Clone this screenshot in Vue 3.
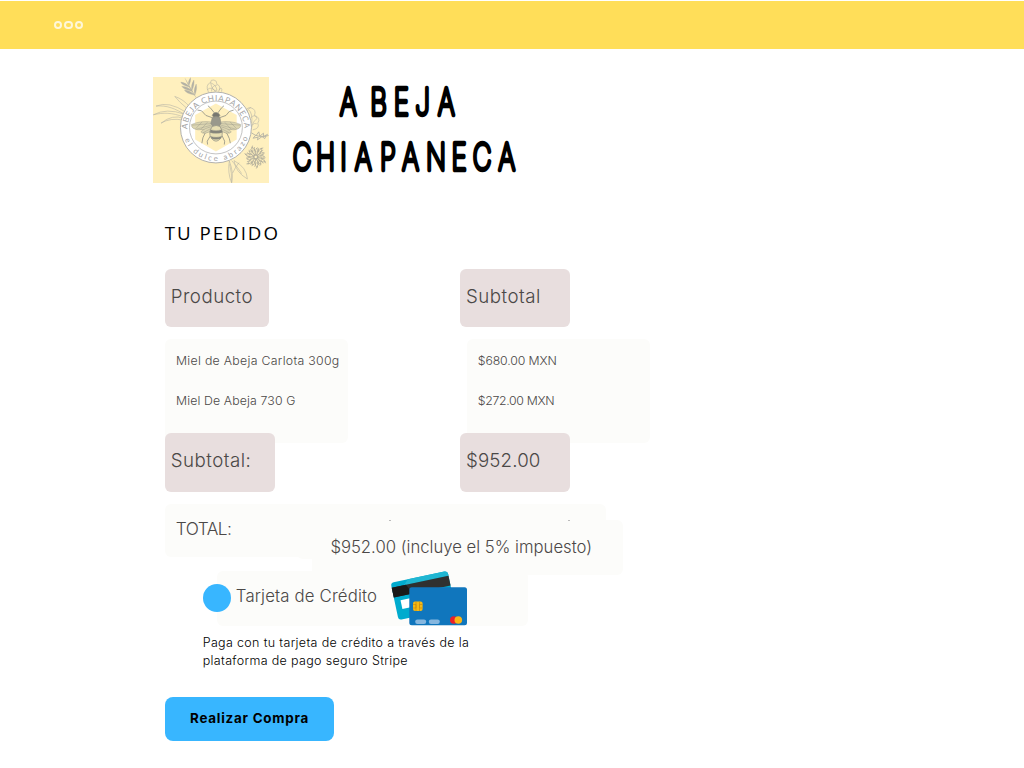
<script setup>
const products = ['Miel de Abeja Carlota 300g', 'Miel De Abeja 730 G']
const prices = ['$680.00 MXN', '$272.00 MXN']
const petals = Array.from({ length: 13 }, (_, i) => i * 27.7)
</script>

<template>
  <div class="page">
    <header class="topbar"><i></i><i></i><i></i></header>
    <main>
      <section class="brand">
        <svg class="logo" viewBox="39 36 348 317" preserveAspectRatio="none">
          <defs>
            <path id="arc-top" d="M142 192 A85 85 0 1 1 312 192" />
            <path id="arc-bottom" d="M127 187 A100 100 0 0 0 327 187" />
          </defs>
          <rect x="39" y="36" width="348" height="317" fill="#fff0be" />
          <g fill="none" stroke="#b3b1a4" stroke-width="1.7">
            <path transform="translate(169 99)" fill="#b3b1a4" stroke-width="1" d="M0 0C-12 -16 -24 -34 -34 -59M-6 -9Q-32 -14 -36 -24Q-18 -22 -6 -9M-12 -20Q-39 -25 -44 -35Q-24 -34 -12 -20M-21 -33Q-45 -39 -47 -48Q-31 -46 -21 -33M-5 -9Q3 -29 -1 -42Q-10 -25 -5 -9M-14 -22Q-5 -41 -8 -54Q-18 -38 -14 -22M-23 -37Q-16 -52 -18 -61Q-27 -50 -23 -37" />
            <path d="M137 150C105 130 80 120 48 123Q86 107 137 141M132 156C96 142 69 142 40 149Q79 128 132 147M130 165Q91 157 63 174Q98 146 131 160M144 133Q117 111 104 94Q131 103 149 126" />
            <path d="M205 82Q194 60 211 52Q211 43 221 45Q230 46 230 58Q244 63 235 80M211 53Q229 61 230 76Q216 80 211 53M201 74Q215 62 226 81M230 60Q213 62 214 79M235 75Q247 63 244 80" />
            <path d="M314 144Q315 127 331 128Q349 133 342 151Q362 157 352 174Q359 190 337 194M325 134Q337 145 334 174M331 158Q343 145 350 160Q340 166 334 181M332 127Q318 130 321 151M349 176Q335 171 333 190" />
            <path d="M333 203Q355 220 384 211M347 211L355 200L358 213L369 204L369 214L382 207M346 210L338 219L353 216L351 224L365 214M364 214L373 220L377 211" stroke-width="2.6" />
            <path d="M267 287Q281 323 274 353Q261 322 267 287M281 286Q319 306 321 341Q285 320 281 286M274 286Q294 308 304 325M268 297Q275 324 274 350M277 323Q285 305 296 292" />
            <g transform="translate(346 275)" stroke="#a5a396">
              <g v-for="(a, i) in petals" :key="a" :transform="`rotate(${a}) scale(${i % 2 ? 1 : 0.84})`">
                <path d="M5 0Q14 -6 24 -3L32 0L24 4Q14 5 5 0M16 -1L27 -8M18 1L29 7M27 -3L35 3" />
              </g>
              <circle r="6" />
            </g>
          </g>
          <circle cx="227" cy="187" r="106" fill="#fff" stroke="#a6a6a6" stroke-width="2.6" />
          <circle cx="227" cy="187" r="79" fill="#fff" stroke="#a6a6a6" stroke-width="2" />
          <path d="M227 115L289 150V223L227 259L165 223V150Z" fill="#fff0be" />
          <g fill="none" stroke="#8f8e83" stroke-width="2">
            <path d="M222 143L210 128L203 122M233 143L244 128L251 122M217 158L197 151L184 137L172 135M237 158L257 151L267 139L280 135M216 192L195 203L188 218L185 234M239 192L260 205L267 220L270 234M211 211L201 228L202 238M245 211L253 228L252 238" stroke-width="2.4" />
            <g fill="#dcd5b0" stroke-width="1.1">
              <path d="M218 171Q182 165 154 178Q153 192 174 194Q198 197 219 183Z" />
              <path d="M218 184Q193 188 182 200Q190 211 217 195Z" />
              <path d="M236 171Q272 165 301 178Q302 192 281 194Q257 197 236 183Z" />
              <path d="M236 184Q261 188 273 200Q265 211 238 195Z" />
              <path d="M217 175L156 180M217 179L169 192M202 171L182 193M186 170L166 191M218 187L188 203M238 175L299 180M238 179L286 192M253 171L273 193M269 170L289 191M237 187L267 203" fill="none" />
            </g>
            <path d="M216 151Q219 141 228 142Q237 143 239 151L234 157H221Z" fill="#77776f" />
            <path d="M216 158Q227 151 239 158L242 175L235 185H219L212 175Z" fill="#99988c" />
            <path d="M216 184Q228 178 239 184Q252 205 241 220Q227 236 214 220Q202 204 216 184Z" fill="#e8dfb3" />
            <path d="M211 194Q227 199 244 194L246 202Q227 207 209 202ZM212 214Q228 219 243 214L241 220Q227 225 214 220Z" fill="#85847a" stroke-width="1" />
          </g>
          <g class="seal-text">
            <text><textPath href="#arc-top" textLength="264">ABEJA CHIAPANECA</textPath></text>
            <text class="small"><textPath href="#arc-bottom" startOffset="37" textLength="246">el dulce abrazo</textPath></text>
          </g>
        </svg>
        <svg class="title" viewBox="280 70 250 120" aria-label="Abeja Chiapaneca">
          <g transform="scale(.7 1)">
            <text y="114.7" x="497.6 540.7 573.3 603.5 637.6">ABEJA</text>
            <text y="169.7" x="431.5 465 490.7 518.8 554 586.6 622.9 656 688.7 723.9">CHIAPANECA</text>
          </g>
        </svg>
      </section>

      <h2>TU PEDIDO</h2>

      <section class="order">
        <div class="chip first">Producto</div>
        <div class="chip sub">Subtotal</div>
        <ul class="list names"><li v-for="p in products" :key="p">{{ p }}</li></ul>
        <ul class="list prices"><li v-for="p in prices" :key="p">{{ p }}</li></ul>
        <div class="chip below label">Subtotal:</div>
        <div class="chip below amount">$952.00</div>
      </section>

      <section class="total">
        <span class="total-label">TOTAL:</span>
        <div class="patch"></div>
        <div class="total-value">$952.00 (incluye el 5% impuesto)<i></i><i></i></div>
      </section>

      <section class="method">
        <span class="radio"></span>
        <span class="method-name">Tarjeta de Crédito</span>
        <svg class="cards" viewBox="0 0 80 58">
          <g transform="rotate(-12 10 35)">
            <rect x="5.5" y="11.5" width="58" height="38" rx="3" fill="#00abce" />
            <path d="M23 11.5H60Q63.5 11.5 63.5 15V16.5H18Z" fill="#20b6d2" />
            <path d="M5.5 16.5H63.5V26.5H5.5Z" fill="#303030" />
            <path d="M5.5 16.5H20L25 26.5H5.5Z" fill="#191919" />
            <rect x="11.5" y="30.5" width="30" height="9" fill="#fff" />
          </g>
          <rect x="19.3" y="17.3" width="57.7" height="38" rx="2.5" fill="#1076bd" />
          <rect x="23" y="31.5" width="9.6" height="9.5" rx="2" fill="#f5b914" />
          <path d="M23 34.5H26V38H23M32.6 34.5H29.5V38H32.6M26 31.5V41M29.5 31.5V41" fill="none" stroke="#c78b10" stroke-width=".7" />
          <rect x="25.2" y="49.4" width="11" height="4.5" rx="2.2" fill="#86b7df" />
          <rect x="38.8" y="49.4" width="11" height="4.5" rx="2.2" fill="#86b7df" />
          <circle cx="63.8" cy="50" r="3.8" fill="#ec2028" />
          <circle cx="68.3" cy="50" r="3.8" fill="#fcb514" />
        </svg>
      </section>
      <p class="note">Paga con tu tarjeta de crédito a través de la<br />plataforma de pago seguro Stripe</p>
      <button>Realizar Compra</button>
    </main>
  </div>
</template>

<style>
body { background: #fff; }
</style>

<style scoped>
.page { width: 1024px; height: 768px; overflow: hidden; padding-top: 1px; box-sizing: border-box; font-family: Inter, "Liberation Sans", sans-serif; font-weight: 300; color: #4b4847; white-space: nowrap; }
.topbar { height: 47.6px; background: #ffde59; display: flex; gap: 2.2px; padding: 20px 0 0 54px; box-sizing: border-box; }
.topbar i { width: 8.3px; height: 8.3px; box-sizing: border-box; border: 2px solid #fff7d8; border-radius: 50%; }
main { padding-left: 164.7px; }
.brand { display: flex; height: 134.4px; padding-top: 21.4px; box-sizing: border-box; margin-left: -12px; }
.logo { width: 116.5px; height: 106px; margin-top: 7px; flex: none; }
.title { width: 250px; height: 120px; margin-left: 11.3px; }
.title text { font: 100 37px Inter, sans-serif; text-anchor: middle; fill: #000; stroke: #000; stroke-width: 4px; stroke-linejoin: round; stroke-linecap: round; vector-effect: non-scaling-stroke; }
.seal-text { font: 400 24px Lato, sans-serif; fill: #a3a3a3; }
.seal-text .small { font-size: 23px; }
h2 { margin: 36.4px 0 0; height: 49.5px; font: 400 18.7px/28px "Open Sans", sans-serif; letter-spacing: 2px; color: #000; }
.order { display: grid; grid-template-columns: 295.3px 200px; grid-template-rows: 70.3px 94.2px 70.8px; align-items: start; }
.chip { height: 58.5px; box-sizing: border-box; border-radius: 6px; background: #e8dede; padding-left: 6px; font-size: 18.7px; line-height: 55px; width: 110.5px; letter-spacing: .5px; }
.first { width: 104.5px; }
.amount { letter-spacing: .15px; }
.below { position: relative; z-index: 1; line-height: 56px; }
.list { margin: 0; padding: 1.5px 0 0 11.3px; list-style: none; width: 183.5px; height: 104px; box-sizing: border-box; border-radius: 6px; background: #fcfcfa; font-size: 12.3px; line-height: 40px; }
.names li { letter-spacing: .3px; }
.names li + li { letter-spacing: .13px; }
.prices { margin-left: 7px; padding-left: 10.8px; letter-spacing: -.12px; }
.prices li + li { letter-spacing: -.32px; }
.total { position: relative; height: 52.5px; width: 441.8px; border-radius: 6px; background: #fcfcfa; }
.total-label { display: block; padding-left: 11px; font-size: 17.3px; line-height: 49px; letter-spacing: -.5px; }
.patch { position: absolute; left: 132px; top: 40px; width: 180px; height: 15px; border-radius: 6px; background: #fcfcfa; }
.total-value { position: absolute; left: 147.5px; top: 15.7px; width: 310.5px; height: 55.5px; padding-left: 18.2px; box-sizing: border-box; border-radius: 0 6px 6px 0; background: #fcfcfa; font-size: 16.7px; line-height: 54px; }
.total-value i { position: absolute; top: 0; left: 77px; width: 2px; height: 1px; background: #bbb; }
.total-value i + i { left: 256px; }
.method { position: relative; display: flex; align-items: center; width: 311px; height: 55px; margin: 14px 0 0 52.5px; border-radius: 6px; background: #fcfcfa; }
.radio { width: 28px; height: 28px; margin-left: -14.4px; border-radius: 50%; background: #38b6ff; }
.method-name { margin-left: 5px; width: 154px; height: 50px; line-height: 47px; font-size: 16.8px; letter-spacing: .15px; }
.cards { width: 80px; height: 58px; position: relative; top: .8px; }
.note { margin: 8.2px 0 0 38px; font-size: 12.5px; line-height: 18px; letter-spacing: .34px; color: #000; }
button { display: block; margin-top: 27.6px; width: 169.7px; height: 44px; padding: 0 0 3px; border: 0; border-radius: 8px; background: #38b6ff; color: #000; font: 700 13.4px Inter, sans-serif; letter-spacing: .75px; }
</style>
